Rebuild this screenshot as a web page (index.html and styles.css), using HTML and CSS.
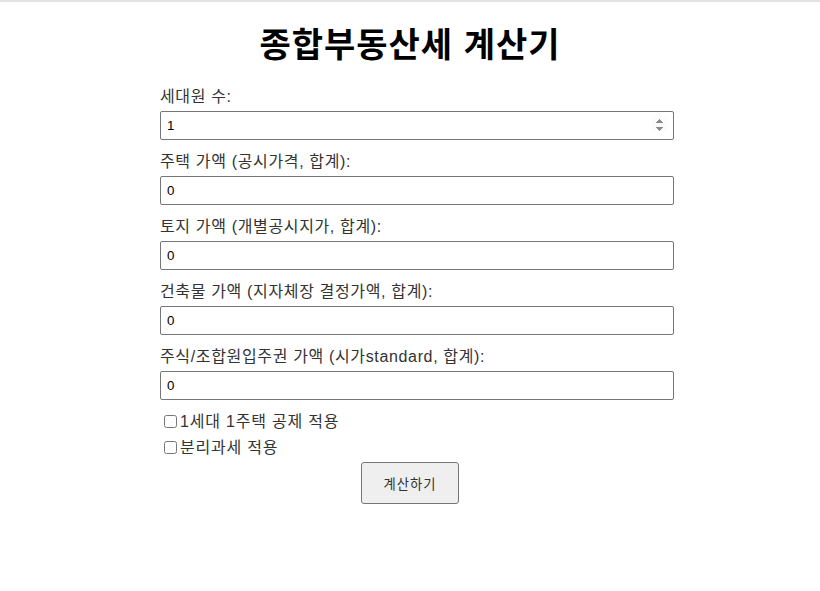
FILE: index.html
```html
<!DOCTYPE html>
<html lang="ko">
<head>
<meta charset="utf-8">
<title>종합부동산세 계산기</title>
<link rel="stylesheet" href="styles.css">
</head>
<body>
<div class="topbar"></div>
<h1 class="title">종합부동산세 계산기</h1>
<form class="container">
  <label class="field-label" for="members">세대원 수:</label>
  <input class="field-input" type="number" id="members" value="1">

  <label class="field-label" for="house">주택 가액 (공시가격, 합계):</label>
  <input class="field-input" type="text" id="house" value="0">

  <label class="field-label" for="land">토지 가액 (개별공시지가, 합계):</label>
  <input class="field-input" type="text" id="land" value="0">

  <label class="field-label" for="building">건축물 가액 (지자체장 결정가액, 합계):</label>
  <input class="field-input" type="text" id="building" value="0">

  <label class="field-label" for="stock">주식/조합원입주권 가액 (시가standard, 합계):</label>
  <input class="field-input" type="text" id="stock" value="0">

  <label class="check-row"><input class="check" type="checkbox">1세대 1주택 공제 적용</label>
  <label class="check-row second"><input class="check" type="checkbox">분리과세 적용</label>

  <div class="actions">
    <button class="btn" type="button">계산하기</button>
  </div>
</form>
</body>
</html>
```

FILE: styles.css
```css
html, body {
  margin: 0;
  padding: 0;
  background: #fff;
}
body {
  font-family: "Liberation Sans", "Noto Sans CJK KR", sans-serif;
  color: #333;
}
.topbar {
  height: 2px;
  background: #e3e3e3;
}
.title {
  margin: 20.5px 0 24.5px;
  text-align: center;
  font-family: "Noto Sans CJK KR", sans-serif;
  font-weight: 700;
  font-size: 34px;
  letter-spacing: 1px;
  line-height: 40px;
  color: #000;
}
.container {
  width: 500px;
  margin: 0 auto;
}
.field-label {
  display: block;
  font-size: 16px;
  letter-spacing: 0.65px;
  line-height: 19px;
  margin-bottom: 5px;
  color: #333;
}
.field-input {
  display: block;
  box-sizing: content-box;
  width: 100%;
  height: 15px;
  padding: 6px;
  margin: 0 0 12px 0;
  border: 1px solid #767676;
  border-radius: 2px;
  font-family: "Liberation Sans", sans-serif;
  font-size: 13.33px;
  color: #000;
  background: #fff;
}
.field-input::-webkit-inner-spin-button {
  opacity: 1;
}
.check-row {
  display: block;
  font-size: 16px;
  letter-spacing: 0.8px;
  line-height: 19px;
  color: #333;
}
.check-row.second {
  margin-top: 7px;
}
.check {
  width: 13px;
  height: 13px;
  margin: 0 3px 0 4px;
  vertical-align: -1px;
}
.actions {
  display: flex;
  justify-content: center;
  margin-top: 5px;
}
.btn {
  width: 98px;
  height: 42px;
  font-family: "Noto Sans CJK KR", sans-serif;
  font-size: 13.33px;
  letter-spacing: 1px;
  color: #333;
  background: #efefef;
  border: 1px solid #767676;
  border-radius: 3px;
  padding: 0;
}
```
